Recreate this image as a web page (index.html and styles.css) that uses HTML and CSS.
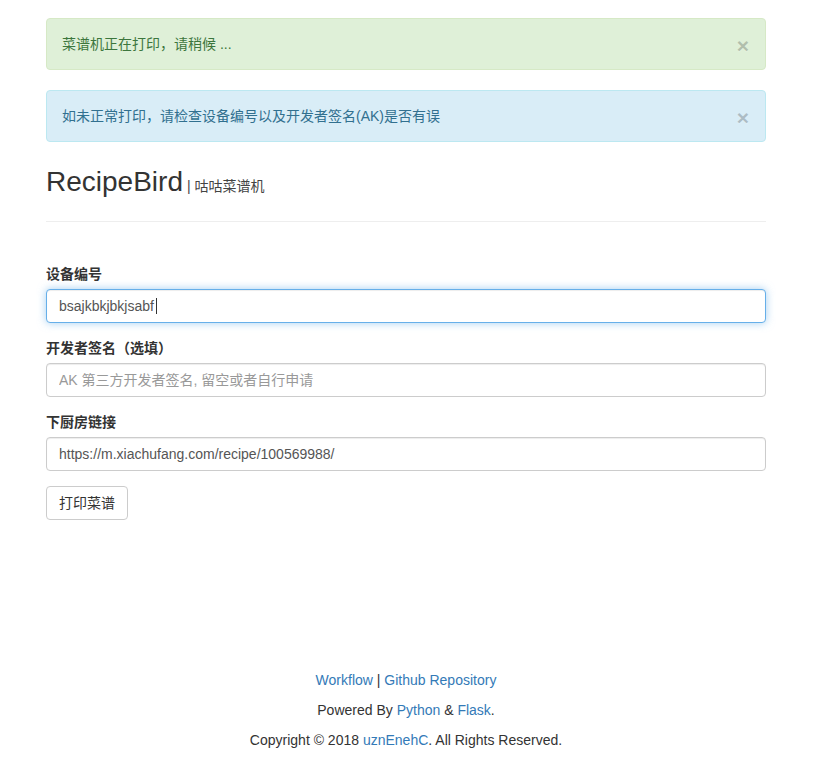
FILE: index.html
```html
<!DOCTYPE html>
<html lang="zh-CN">
<head>
<meta charset="utf-8">
<title>RecipeBird | 咕咕菜谱机</title>
<link rel="stylesheet" href="styles.css">
</head>
<body>
<div class="container">
  <div class="alert alert-success">
    <span class="alert-text">菜谱机正在打印，请稍候 ...</span>
    <button type="button" class="close" aria-label="Close">×</button>
  </div>
  <div class="alert alert-info">
    <span class="alert-text">如未正常打印，请检查设备编号以及开发者签名(AK)是否有误</span>
    <button type="button" class="close" aria-label="Close">×</button>
  </div>

  <div class="page-header">
    <h1 class="title">RecipeBird <small class="subtitle">| 咕咕菜谱机</small></h1>
  </div>

  <form class="form">
    <div class="form-group">
      <label class="form-label" for="device">设备编号</label>
      <div class="input-wrap">
        <input class="form-control is-focus" id="device" type="text" value="bsajkbkjbkjsabf">
        <span class="caret"></span>
      </div>
    </div>
    <div class="form-group">
      <label class="form-label" for="ak">开发者签名（选填）</label>
      <input class="form-control" id="ak" type="text" placeholder="AK 第三方开发者签名, 留空或者自行申请">
    </div>
    <div class="form-group">
      <label class="form-label" for="url">下厨房链接</label>
      <input class="form-control" id="url" type="text" value="https://m.xiachufang.com/recipe/100569988/">
    </div>
    <button type="button" class="btn">打印菜谱</button>
  </form>

  <footer class="footer">
    <p class="footer-line"><a class="link" href="#">Workflow</a> | <a class="link" href="#">Github Repository</a></p>
    <p class="footer-line">Powered By <a class="link" href="#">Python</a> &amp; <a class="link" href="#">Flask</a>.</p>
    <p class="footer-line">Copyright © 2018 <a class="link" href="#">uznEnehC</a>. All Rights Reserved.</p>
  </footer>
</div>
</body>
</html>
```
FILE: styles.css
```css
* { box-sizing: border-box; }

html, body { margin: 0; background: #fff; }

body {
  padding-right: 2px;
  font-family: "Liberation Sans", "Noto Sans CJK SC", sans-serif;
  font-size: 14px;
  line-height: 20px;
  color: #333;
}

.container {
  width: 720px;
  margin: 0 auto;
  padding-top: 18px;
}

.alert {
  display: flex;
  align-items: center;
  justify-content: space-between;
  height: 52px;
  padding: 0 16px 0 15px;
  margin-bottom: 20px;
  border: 1px solid transparent;
  border-radius: 4px;
}

.alert-text { line-height: 20px; }

.alert-success {
  background: #dff0d8;
  border-color: #d6e9c6;
  color: #3c763d;
}

.alert-info {
  background: #d9edf7;
  border-color: #bce8f1;
  color: #31708f;
}

.close {
  height: 20px;
  padding: 0;
  margin: 4px 0 0 0;
  background: transparent;
  border: 0;
  font-family: "Liberation Sans", sans-serif;
  font-size: 21px;
  font-weight: bold;
  line-height: 20px;
  color: #000;
  opacity: 0.2;
  text-shadow: 0 1px 0 #fff;
  cursor: pointer;
}

.page-header {
  padding-bottom: 19px;
  margin-bottom: 42px;
  border-bottom: 1px solid #eee;
}

.title {
  display: flex;
  align-items: baseline;
  gap: 4px;
  height: 40px;
  margin: 0;
  font-size: 28px;
  font-weight: 400;
  line-height: 40px;
  color: #333;
}

.subtitle {
  font-size: 14px;
  line-height: 20px;
  color: #444;
  font-weight: 400;
}

.form-group { margin-bottom: 15px; }

.form-label {
  display: block;
  height: 20px;
  margin-bottom: 5px;
  font-weight: bold;
  color: #333;
}

.input-wrap { position: relative; }

.caret {
  position: absolute;
  left: 110px;
  top: 9px;
  width: 1px;
  height: 16px;
  background: #333;
}

.form-control {
  display: block;
  width: 100%;
  height: 34px;
  padding: 6px 12px;
  font-family: inherit;
  font-size: 14px;
  line-height: 20px;
  color: #555;
  background: #fff;
  border: 1px solid #ccc;
  border-radius: 4px;
  box-shadow: inset 0 1px 1px rgba(0,0,0,.075);
  outline: 0;
}

.form-control::placeholder { color: #999; }

.form-control.is-focus,
.form-control:focus {
  border-color: #66afe9;
  box-shadow: inset 0 1px 1px rgba(0,0,0,.075), 0 0 8px rgba(102,175,233,.6);
}

.btn {
  display: block;
  height: 34px;
  padding: 6px 12px;
  font-family: inherit;
  font-size: 14px;
  line-height: 20px;
  color: #333;
  background: #fff;
  border: 1px solid #ccc;
  border-radius: 4px;
  cursor: pointer;
}

.footer {
  margin-top: 150px;
  text-align: center;
}

.footer-line { margin: 0 0 10px; height: 20px; }

.link {
  color: #337ab7;
  text-decoration: none;
}
```
